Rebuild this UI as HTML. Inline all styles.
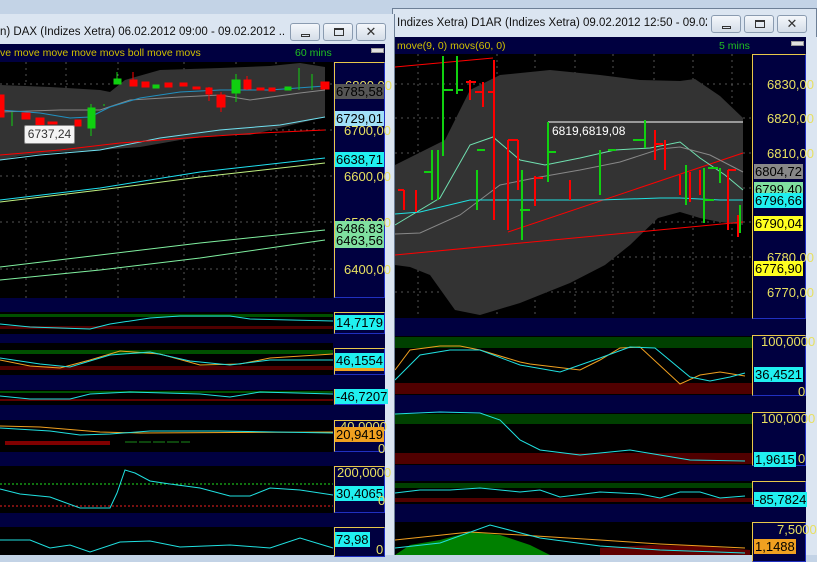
<!DOCTYPE html>
<html><head><meta charset="utf-8"><style>
*{margin:0;padding:0;box-sizing:border-box}
body{width:817px;height:555px;overflow:hidden;background:#c3d3e6;font-family:"Liberation Sans",sans-serif;position:relative}
.a{position:absolute}
.nv{background:#000040}
.bk{background:#000}
.ttl{font-size:11.5px;color:#111;white-space:nowrap;line-height:18px;overflow:hidden}
.btn{position:absolute;width:30px;height:18px;border:1px solid #8a9bb0;border-radius:3px;background:linear-gradient(#f4f7fb,#d4dde8)}
.ax{position:absolute;border:1px solid #e8c84a;border-right-color:#2030c0;border-bottom-color:#2030c0;background:#000040}
.lab{position:absolute;font-size:13px;line-height:15px;padding:0 1px;color:#000;white-space:nowrap}
.yl{position:absolute;font-size:13px;color:#e8e060;white-space:nowrap;line-height:15px}
.hd{font-size:10.5px;color:#d0c000;white-space:nowrap;line-height:17px}
</style></head><body>

<!-- right window (behind) -->
<div class="a" style="left:392px;top:8px;width:425px;height:547px;background:#dbe5f1;border:1px solid #6d7f96"></div>
<div class="a ttl" style="left:397px;top:14px;width:310px">Indizes Xetra) D1AR (Indizes Xetra) 09.02.2012 12:50 - 09.02...</div>
<div class="btn" style="left:711px;top:15px"><div class="a" style="left:10px;top:10px;width:9px;height:3px;border:1px solid #333"></div></div>
<div class="btn" style="left:744px;top:15px"><div class="a" style="left:10px;top:4px;width:10px;height:8px;border:1px solid #333;border-top-width:2px"></div></div>
<div class="btn" style="left:777px;top:15px;font-size:13px;text-align:center;line-height:16px;color:#333">✕</div>
<div class="a nv" style="left:395px;top:37px;width:411px;height:518px"></div>
<div class="a hd" style="left:397px;top:38px">move(9, 0) movs(60, 0)</div>
<div class="a hd" style="left:719px;top:38px;color:#20c020">5 mins</div>
<div class="a" style="left:791px;top:41px;width:13px;height:5px;background:#e0e0e0;border:1px solid #999"></div>
<div class="a bk" style="left:395px;top:54px;width:357px;height:264px"></div>
<div class="a bk" style="left:395px;top:336px;width:357px;height:59px"></div>
<div class="a bk" style="left:395px;top:413px;width:357px;height:52px"></div>
<div class="a bk" style="left:395px;top:481px;width:357px;height:23px"></div>
<div class="a bk" style="left:395px;top:522px;width:357px;height:33px"></div>
<div class="ax" style="left:752px;top:54px;width:54px;height:265px"></div>
<div class="ax" style="left:752px;top:335px;width:54px;height:61px"></div>
<div class="ax" style="left:752px;top:412px;width:54px;height:54px"></div>
<div class="ax" style="left:752px;top:481px;width:54px;height:24px"></div>
<div class="ax" style="left:752px;top:522px;width:54px;height:40px"></div>
<div class="a" style="left:806px;top:37px;width:11px;height:518px;background:#dbe5f1"></div>

<svg class="a" style="left:0;top:0" width="817" height="555">
<g stroke="#555" stroke-dasharray="2,4" stroke-width="1">
<line x1="395" y1="84" x2="752" y2="84"/><line x1="395" y1="118" x2="752" y2="118"/><line x1="395" y1="153" x2="752" y2="153"/><line x1="395" y1="188" x2="752" y2="188"/><line x1="395" y1="222" x2="752" y2="222"/><line x1="395" y1="257" x2="752" y2="257"/><line x1="395" y1="292" x2="752" y2="292"/>
<line x1="418" y1="54" x2="418" y2="318"/><line x1="497" y1="54" x2="497" y2="318"/><line x1="535" y1="54" x2="535" y2="318"/><line x1="575" y1="54" x2="575" y2="318"/><line x1="613" y1="54" x2="613" y2="318"/><line x1="654" y1="54" x2="654" y2="318"/><line x1="693" y1="54" x2="693" y2="318"/><line x1="732" y1="54" x2="732" y2="318"/>
</g>
<polygon fill="#333" points="395,165 445,140 470,90 500,75 550,70 600,75 640,80 680,81 695,79 720,96 743,118 743,225 720,222 700,218 680,212 658,218 630,245 605,265 570,283 520,303 480,315 455,310 430,275 410,267 395,265"/>
<line x1="548" y1="122" x2="743" y2="122" stroke="#fff"/>
<polyline fill="none" stroke="#f00" points="395,67 493,58"/>
<polyline fill="none" stroke="#f00" points="395,255 743,222"/>
<polyline fill="none" stroke="#f00" points="508,232 743,153"/>
<polyline fill="none" stroke="#70e0b0" points="395,225 440,198 470,145 493,137 520,160 545,165 580,158 615,150 650,148 680,142 700,158 725,175 743,190"/>
<polyline fill="none" stroke="#888" points="395,234 420,233 460,215 500,185 540,177 580,170 620,162 660,149 680,147 710,155 743,172"/>
<polyline fill="none" stroke="#20e0e0" points="395,214 420,212 470,200 520,200 600,200 660,198 680,198 720,200 743,200"/>
<g stroke="#10d010" stroke-width="2" fill="none">
<path d="M443,56v100M443,90h10M457,56v38M457,90h6M432,150v50M438,150v50M432,172h-8M477,170v40M477,150h8M522,170v70M520,210h10M548,122v60M548,152h8M600,150v45M608,150h8M645,120v28M633,140h12M686,165v40M704,168v55M704,200h10M708,168h10M720,168v15M740,205v28"/>
</g>
<g stroke="#f00" stroke-width="2" fill="none">
<path d="M470,80v20M466,82h10M483,82v25M483,92h-8M494,60v160M494,92h-6M404,190v20M398,190h6M416,190v22M508,140v90M508,140h10M518,140v50M535,176v30M535,178h8M570,180v20M655,130v30M655,144h8M665,140v30M680,175v20M690,172v30M700,170v25M728,170v60M728,170h8M738,215v22"/>
</g>
<rect x="395" y="337" width="357" height="11" fill="#004000"/><rect x="395" y="383" width="357" height="11" fill="#500000"/>
<polyline fill="none" stroke="#f0a020" points="395,370 410,350 440,346 460,346 480,350 520,362 530,364 580,370 600,360 620,348 640,347 680,384 700,375 720,372 745,376"/>
<polyline fill="none" stroke="#20e0e0" points="395,380 420,355 450,350 480,350 520,365 560,372 600,358 630,347 655,348 690,377 710,381 730,377 745,373"/>
<rect x="395" y="414" width="357" height="10" fill="#004000"/><rect x="395" y="453" width="357" height="11" fill="#500000"/>
<polyline fill="none" stroke="#20e0e0" points="395,414 440,412 480,413 500,420 520,440 540,450 580,455 630,450 660,455 690,460 745,461"/>
<rect x="395" y="483" width="357" height="5" fill="#004000"/><rect x="395" y="498" width="357" height="4" fill="#500000"/>
<polyline fill="none" stroke="#20e0e0" points="395,493 420,490 450,490 480,488 520,492 540,490 560,497 600,492 640,494 660,498 680,492 700,492 720,498 745,496"/>
<polygon fill="#008000" points="395,555 410,545 440,540 470,532 500,535 530,545 550,555"/>
<polygon fill="#600000" points="600,548 650,545 700,546 750,550 750,555 600,555"/>
<polyline fill="none" stroke="#f0a020" points="395,540 470,532 520,535 600,540 660,544 745,548"/>
<polyline fill="none" stroke="#20e0e0" points="395,548 440,543 490,525 540,538 600,546 660,550 745,553"/>
</svg>
<div class="yl" style="left:767px;top:77px">6830,00</div>
<div class="yl" style="left:767px;top:111px">6820,00</div>
<div class="yl" style="left:767px;top:146px">6810,00</div>
<div class="yl" style="left:767px;top:250px">6780,00</div>
<div class="yl" style="left:767px;top:285px">6770,00</div>
<div class="lab" style="left:754px;top:164px;background:#888">6804,72</div>
<div class="lab" style="left:754px;top:182px;background:#80e0a0">6799,40</div>
<div class="lab" style="left:754px;top:193px;background:#20f0f0">6796,66</div>
<div class="lab" style="left:754px;top:216px;background:#ffff20">6790,04</div>
<div class="lab" style="left:754px;top:261px;background:#ffff20">6776,90</div>
<div class="a" style="left:552px;top:124px;font-size:12px;color:#fff">6819,6819,08</div>
<div class="yl" style="left:761px;top:334px">100,0000</div>
<div class="yl" style="left:798px;top:384px">0</div>
<div class="lab" style="left:754px;top:367px;background:#20f0f0">36,4521</div>
<div class="yl" style="left:761px;top:411px">100,0000</div>
<div class="yl" style="left:798px;top:451px">0</div>
<div class="lab" style="left:754px;top:452px;background:#20f0f0">1,9615</div>
<div class="lab" style="left:754px;top:492px;background:#20f0f0">-85,7824</div>
<div class="yl" style="left:777px;top:522px">7,5000</div>
<div class="lab" style="left:754px;top:539px;background:#f0a020">1,1488</div>

<!-- left window (front) -->
<div class="a" style="left:0;top:14px;width:395px;height:541px;background:#dbe5f1;border-right:1px solid #6d7f96"></div>
<div class="a ttl" style="left:0;top:23px;width:285px">n)  DAX (Indizes Xetra) 06.02.2012 09:00 - 09.02.2012 ...</div>
<div class="btn" style="left:290px;top:23px"><div class="a" style="left:10px;top:10px;width:9px;height:3px;border:1px solid #333"></div></div>
<div class="btn" style="left:323px;top:23px"><div class="a" style="left:10px;top:4px;width:10px;height:8px;border:1px solid #333;border-top-width:2px"></div></div>
<div class="btn" style="left:356px;top:23px;font-size:13px;text-align:center;line-height:16px;color:#333">✕</div>
<div class="a nv" style="left:0;top:44px;width:385px;height:511px"></div>
<div class="a hd" style="left:0;top:45px">ve move move move movs boll move movs</div>
<div class="a hd" style="left:295px;top:45px;color:#20c020">60 mins</div>
<div class="a" style="left:371px;top:48px;width:13px;height:5px;background:#e0e0e0;border:1px solid #999"></div>
<div class="a bk" style="left:0;top:62px;width:333px;height:236px"></div>
<div class="a bk" style="left:0;top:312px;width:333px;height:22px"></div>
<div class="a bk" style="left:0;top:343px;width:333px;height:32px"></div>
<div class="a bk" style="left:0;top:390px;width:333px;height:15px"></div>
<div class="a bk" style="left:0;top:420px;width:333px;height:32px"></div>
<div class="a bk" style="left:0;top:466px;width:333px;height:47px"></div>
<div class="a bk" style="left:0;top:527px;width:333px;height:28px"></div>
<div class="ax" style="left:334px;top:62px;width:51px;height:236px"></div>
<div class="ax" style="left:334px;top:312px;width:51px;height:22px"></div>
<div class="ax" style="left:334px;top:348px;width:51px;height:27px"></div>
<div class="ax" style="left:334px;top:389px;width:51px;height:16px"></div>
<div class="ax" style="left:334px;top:420px;width:51px;height:32px"></div>
<div class="ax" style="left:334px;top:466px;width:51px;height:47px"></div>
<div class="ax" style="left:334px;top:527px;width:51px;height:30px"></div>

<svg class="a" style="left:0;top:0" width="395" height="555">
<g stroke="#555" stroke-dasharray="2,4">
<line x1="0" y1="84" x2="333" y2="84"/><line x1="0" y1="130" x2="333" y2="130"/><line x1="0" y1="176" x2="333" y2="176"/><line x1="0" y1="222" x2="333" y2="222"/><line x1="0" y1="269" x2="333" y2="269"/>
<line x1="26" y1="62" x2="26" y2="298"/><line x1="66" y1="62" x2="66" y2="298"/><line x1="118" y1="62" x2="118" y2="298"/><line x1="184" y1="62" x2="184" y2="298"/><line x1="236" y1="62" x2="236" y2="298"/><line x1="276" y1="62" x2="276" y2="298"/><line x1="314" y1="62" x2="314" y2="298"/>
</g>
<polygon fill="#333" points="0,85 50,87 100,90 110,92 125,80 160,70 220,68 270,66 300,63 325,67 325,117 300,123 250,135 220,135 180,140 140,147 100,150 60,152 20,156 0,160"/>
<polyline fill="none" stroke="#888" points="0,112 60,110 100,110 130,100 180,97 220,95 250,100 300,93 325,90"/>
<polyline fill="none" stroke="#2090c0" points="0,110 40,113 70,118 90,117 110,107 140,98 180,92 220,90 270,90 325,86"/>
<polyline fill="none" stroke="#70e0f0" points="0,160 40,155 100,150 160,138 220,130 280,125 325,117"/>
<polyline fill="none" stroke="#f00" points="0,155 60,150 120,143 200,137 260,133 325,130"/>
<polyline fill="none" stroke="#20e0f0" points="0,200 100,188 200,172 325,158"/>
<polyline fill="none" stroke="#c0f080" points="0,202 100,190 200,177 325,163"/>
<polyline fill="none" stroke="#80f0a0" points="0,267 100,255 200,243 325,230"/>
<polyline fill="none" stroke="#80f0a0" points="0,280 100,270 200,258 325,240"/>
<g fill="#10d010" stroke="#10d010">
<rect x="88" y="108" width="7" height="20"/><line x1="91" y1="104" x2="91" y2="136"/>
<rect x="114" y="79" width="7" height="5"/><line x1="117" y1="72" x2="117" y2="84"/>
<rect x="153" y="85" width="6" height="3"/><rect x="232" y="80" width="8" height="13"/><line x1="236" y1="74" x2="236" y2="102"/>
<rect x="285" y="87" width="6" height="3"/><line x1="299" y1="68" x2="299" y2="90"/><line x1="312" y1="74" x2="312" y2="90"/>
<line x1="12" y1="112" x2="12" y2="126"/><line x1="104" y1="104" x2="104" y2="106"/>
</g>
<g fill="#f00" stroke="#f00">
<rect x="0" y="95" width="4" height="22"/><rect x="22" y="113" width="8" height="6"/><rect x="36" y="118" width="8" height="7"/><rect x="48" y="122" width="9" height="2"/>
<rect x="130" y="80" width="7" height="6"/><line x1="133" y1="72" x2="133" y2="84"/>
<rect x="142" y="82" width="7" height="5"/><rect x="165" y="83" width="7" height="4"/><rect x="180" y="83" width="7" height="3"/><rect x="193" y="87" width="7" height="2"/>
<rect x="206" y="88" width="6" height="6"/><line x1="209" y1="87" x2="209" y2="101"/><rect x="217" y="95" width="8" height="12"/><line x1="221" y1="92" x2="221" y2="112"/>
<rect x="244" y="80" width="7" height="9"/><line x1="247" y1="76" x2="247" y2="90"/><rect x="257" y="88" width="7" height="2"/><rect x="269" y="88" width="6" height="3"/><rect x="321" y="82" width="8" height="7"/>
<rect x="75" y="120" width="6" height="6"/>
</g>
<rect x="0" y="314" width="333" height="3" fill="#005000"/><rect x="0" y="326" width="333" height="3" fill="#500000"/>
<polyline fill="none" stroke="#20e0e0" points="0,324 30,327 90,329 110,324 150,318 180,316 230,316 250,319 333,321"/>
<rect x="0" y="350" width="333" height="4" fill="#005000"/><rect x="0" y="366" width="333" height="4" fill="#500000"/>
<polyline fill="none" stroke="#f0a020" points="0,360 30,366 60,368 90,360 120,351 160,354 200,365 240,364 270,358 333,354"/>
<polyline fill="none" stroke="#20e0e0" points="0,358 40,364 70,367 110,355 150,352 190,361 230,365 270,360 333,360"/>
<rect x="0" y="391" width="333" height="2" fill="#005000"/><rect x="0" y="399" width="333" height="2" fill="#600000"/>
<polyline fill="none" stroke="#20e0e0" points="0,396 30,399 70,399 90,394 130,392 200,394 230,397 260,392 333,394"/>
<polyline fill="none" stroke="#f0a020" points="0,426 40,427 100,432 140,433 333,432"/>
<polyline fill="none" stroke="#20e0e0" points="0,428 50,431 80,435 110,434 150,431 220,431 333,433"/>
<rect x="5" y="441" width="105" height="4" fill="#800000"/><line x1="125" y1="442" x2="190" y2="442" stroke="#1a8a1a" stroke-dasharray="12,2"/>
<line x1="0" y1="484" x2="333" y2="484" stroke="#20e020" stroke-dasharray="2,2"/>
<line x1="0" y1="506" x2="333" y2="506" stroke="#f02020" stroke-dasharray="2,2"/>
<polyline fill="none" stroke="#20e0e0" points="0,489 20,494 50,497 80,508 110,508 117,493 125,470 135,473 150,481 170,484 200,488 230,496 250,496 270,488 300,490 333,495"/>
<polyline fill="none" stroke="#20e0e0" points="0,540 30,540 50,548 70,545 90,552 120,542 150,541 180,547 230,545 270,548 300,538 333,548"/>
</svg>
<div class="a" style="left:24px;top:125px;width:51px;height:19px;background:#f4f4f4;border:1px solid #888;border-radius:2px;font-size:12px;line-height:17px;text-align:center;color:#333">6737,24</div>
<div class="yl" style="left:345px;top:78px">6800,00</div>
<div class="yl" style="left:344px;top:123px">6700,00</div>
<div class="yl" style="left:344px;top:169px">6600,00</div>
<div class="yl" style="left:344px;top:215px">6500,00</div>
<div class="yl" style="left:344px;top:262px">6400,00</div>
<div class="lab" style="left:335px;top:84px;background:#555;color:#000">6785,58</div>
<div class="lab" style="left:335px;top:111px;background:#a0e0f8">6729,01</div>
<div class="lab" style="left:335px;top:152px;background:#20f0f0">6638,71</div>
<div class="lab" style="left:335px;top:221px;background:#80e0a0">6486,83</div>
<div class="lab" style="left:335px;top:233px;background:#80e0a0">6463,56</div>
<div class="lab" style="left:335px;top:315px;background:#20f0f0">14,7179</div>
<div class="lab" style="left:335px;top:353px;background:#20f0f0;border-bottom:3px solid #f0a020">46,1554</div>
<div class="lab" style="left:335px;top:389px;background:#20f0f0">-46,7207</div>
<div class="yl" style="left:340px;top:419px">40,0000</div>
<div class="lab" style="left:335px;top:427px;background:#f0a020">20,9419</div>
<div class="yl" style="left:378px;top:441px">0</div>
<div class="yl" style="left:337px;top:465px">200,0000</div>
<div class="lab" style="left:335px;top:486px;background:#20f0f0">30,4065</div>
<div class="yl" style="left:378px;top:493px">0</div>
<div class="lab" style="left:335px;top:532px;background:#20f0f0">73,98</div>
<div class="yl" style="left:376px;top:542px">0</div>
</body></html>
